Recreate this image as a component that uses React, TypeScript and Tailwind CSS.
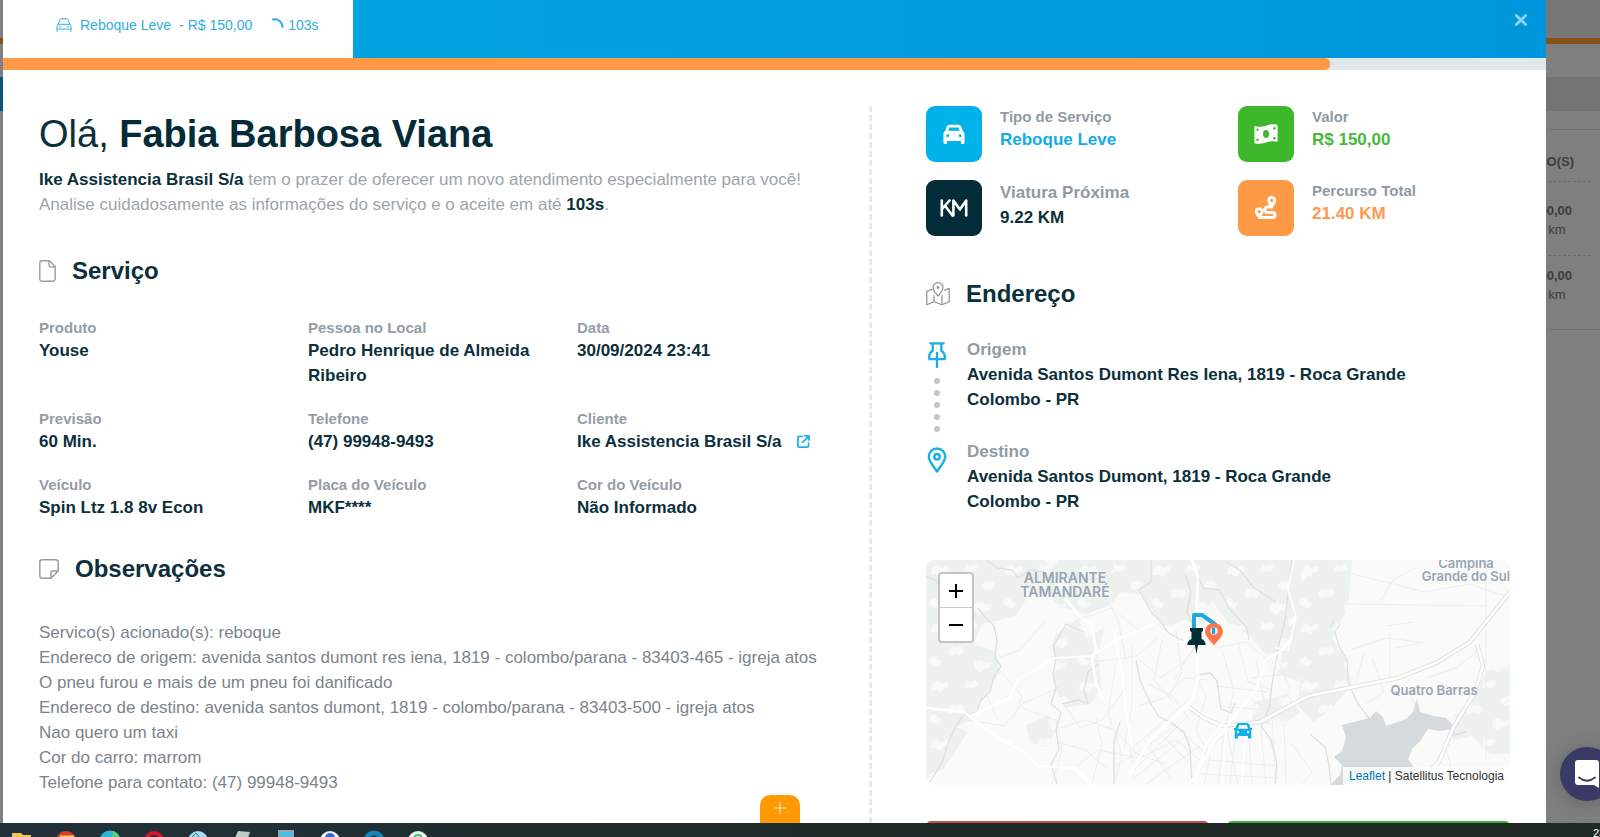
import type { ReactNode } from "react";

type Tone = "sky" | "green" | "navy" | "orange";

const tileTone: Record<Tone, string> = {
  sky: "bg-[#00b2e8]",
  green: "bg-[#3eb82b]",
  navy: "bg-[#032b38]",
  orange: "bg-[#fe9945]",
};

const valueTone: Record<Tone, string> = {
  sky: "text-[#12ace2]",
  green: "text-[#48b83a]",
  navy: "text-[#0b303b]",
  orange: "text-[#fb9a4e]",
};

const CarOutline = () => (
  <svg viewBox="0 0 16 14" className="mr-2 h-[14px] w-4" fill="none" stroke="currentColor" strokeWidth="1" strokeLinecap="round" strokeLinejoin="round" aria-hidden="true">
    <path d="M1 13.300V8.200c0-.9.500-1.600 1.300-1.900h11.400c.8.300 1.300 1 1.300 1.900v5.100M1 11h14M2.300 6.300l1.500-4.400C4.100 1.100 4.700.7 5.500.7h5c.8 0 1.400.4 1.700 1.200l1.500 4.400" />
    <path d="M3.700 8.700h.6M11.700 8.700h.6" strokeWidth="1.300" />
  </svg>
);

const FileOutline = () => (
  <svg viewBox="0 0 17 22" className="h-[22px] w-[17px]" fill="none" stroke="#999ea3" strokeWidth="1.400" strokeLinejoin="round" aria-hidden="true">
    <path d="M3 .8h7.500l5.700 5.700V19a2.200 2.200 0 0 1-2.200 2.200H3A2.200 2.200 0 0 1 .8 19V3A2.200 2.200 0 0 1 3 .8z" />
    <path d="M10 .8v4.500c0 1 .6 1.700 1.600 1.700h4.600" />
  </svg>
);

const NoteOutline = () => (
  <svg viewBox="0 0 20 20" className="h-5 w-5" fill="none" stroke="#999ea3" strokeWidth="1.500" strokeLinejoin="round" aria-hidden="true">
    <path d="M3.200.8h13.600a2.400 2.400 0 0 1 2.400 2.400V12l-7.200 7.200H3.200A2.400 2.400 0 0 1 .8 16.800V3.200A2.400 2.400 0 0 1 3.200.8z" />
    <path d="M12 19v-5.300c0-1 .7-1.700 1.700-1.700H19" />
  </svg>
);

const CarSolid = ({ className }: { className: string }) => (
  <svg viewBox="0 0 24 24" className={className} fill="currentColor" aria-hidden="true">
    <path
      fillRule="evenodd"
      d="M7.200 1.800h9.600c1.500 0 2.700.9 3.200 2.300l1.600 4.700c1.200.7 1.900 1.900 1.900 3.300v9.400c0 .9-.7 1.500-1.500 1.500h-.9c-.8 0-1.500-.6-1.500-1.500v-2H4.400v2c0 .9-.7 1.500-1.500 1.500H2c-.8 0-1.500-.6-1.500-1.500v-9.400c0-1.400.7-2.600 1.900-3.300L4 4.100c.5-1.400 1.700-2.300 3.200-2.300zm0 3.100L5.800 8.500h12.400l-1.400-3.600zM5.200 15.500a1.500 1.500 0 1 0 0-3.100 1.500 1.500 0 0 0 0 3.100zm13.600 0a1.500 1.500 0 1 0 0-3.100 1.500 1.500 0 0 0 0 3.100z"
    />
  </svg>
);

const Money = () => (
  <svg viewBox="0 0 24 20" className="h-5 w-6" aria-hidden="true">
    <path
      d="M.4 3.200c0-.8.700-1.300 1.400-1C5 3.300 8.500 2.900 12 1.700 15.700.500 19.400-.2 22.700.7c.6.200.9.600.9 1.200v14.800c0 .8-.7 1.300-1.400 1.100-3.200-.9-6.700-.4-10.200.8-3.700 1.200-7.400 1.700-10.700.8-.6-.2-.9-.6-.9-1.200z"
      fill="#fff"
    />
    <ellipse cx="12" cy="10" rx="3" ry="3.900" fill="#3eb82b" />
    <g fill="#3eb82b">
      <circle cx="3.600" cy="5.600" r="1.200" />
      <circle cx="3.600" cy="15.800" r="1.200" />
      <circle cx="20.400" cy="4.200" r="1.200" />
      <circle cx="20.400" cy="14.300" r="1.200" />
    </g>
  </svg>
);

const Route = () => (
  <svg viewBox="0 0 24 24" className="h-6 w-6" fill="none" aria-hidden="true">
    <path
      d="M17.500 11h-4a2.800 2.800 0 0 0 0 5.600h5a2.500 2.500 0 0 1 0 5H6.500"
      stroke="#fff"
      strokeWidth="3"
      strokeLinecap="round"
    />
    <path
      fillRule="evenodd"
      fill="#fff"
      d="M17.700 0c2.500 0 4.500 1.900 4.500 4.500 0 2.300-2.400 5.500-4.500 8-2.100-2.500-4.500-5.700-4.500-8 0-2.600 2-4.500 4.500-4.500zm0 6a1.600 1.600 0 1 0 0-3.200 1.600 1.600 0 0 0 0 3.200zM5.200 11.300c2.500 0 4.400 1.800 4.400 4.300 0 2.200-2.400 5-4.400 7.600-2-2.600-4.400-5.400-4.400-7.600 0-2.500 1.900-4.300 4.400-4.300zm0 5.900a1.600 1.600 0 1 0 0-3.200 1.600 1.600 0 0 0 0 3.200z"
    />
  </svg>
);

const Km = () => (
  <svg
    viewBox="0 0 28 18"
    className="h-[18px] w-7"
    fill="none"
    stroke="#fff"
    strokeWidth="2.600"
    strokeLinecap="round"
    strokeLinejoin="round"
    aria-hidden="true"
  >
    <path d="M1.800 1.500v15M9.500 1.500L2 10M5.200 7l7.300 9.500M13.400 16.500v-15l6.500 9 6.300-9v15" />
  </svg>
);

const MapOutline = () => (
  <svg viewBox="0 0 24 24" className="h-6 w-6" fill="none" stroke="#8e9296" strokeWidth="1.200" strokeLinejoin="round" aria-hidden="true">
    <path d="M6.300 7.200L.8 9.400v13.300l7.200-2.900 8 2.900 7.200-2.900V6.400l-5 2M8 13.200v6.600M16 13.200v9.500" />
    <path d="M12 14.200c-1.600-2.300-5-5.300-5-8.600a5 5 0 0 1 10 0c0 3.300-3.400 6.300-5 8.600z" />
    <circle cx="12" cy="5.500" r=".8" />
  </svg>
);

const PinOutline = () => (
  <svg viewBox="0 0 18 26" className="h-[26px] w-[18px]" fill="none" stroke="#18b0e2" strokeWidth="2.300" strokeLinecap="round" strokeLinejoin="round" aria-hidden="true">
    <path d="M2.300 1.300h13.400M4.700 1.500v7.200C2.700 9.900 1.200 12 1.200 14.700v2.400h15.600v-2.400c0-2.700-1.500-4.800-3.500-6V1.500M9 11v14" />
  </svg>
);

const MarkerOutline = () => (
  <svg viewBox="0 0 20 26" className="h-[26px] w-5" fill="none" stroke="#18b0e2" strokeWidth="2.400" strokeLinejoin="round" aria-hidden="true">
    <path d="M10 24.500C7.500 20.500 1.800 14.500 1.800 9.700a8.200 8.200 0 0 1 16.400 0c0 4.800-5.700 10.800-8.200 14.800z" />
    <circle cx="10" cy="9.700" r="2.700" />
  </svg>
);

const ExternalLink = () => (
  <svg viewBox="0 0 14 14" className="h-[13px] w-[13px]" fill="none" stroke="#1cb2e6" strokeWidth="1.900" strokeLinecap="round" strokeLinejoin="round" aria-hidden="true">
    <path d="M5.500 1.500H2.200A1.200 1.200 0 0 0 1 2.700v9.100A1.200 1.200 0 0 0 2.200 13h9a1.200 1.200 0 0 0 1.200-1.200V8.500M8.500 1H13v4.500M13 1L6 8" />
  </svg>
);

function Stat({ label, value, tone, icon, large }: { label: string; value: string; tone: Tone; icon: ReactNode; large?: boolean }) {
  return (
    <div className="flex gap-[18px]">
      <div className={"flex h-14 w-14 shrink-0 items-center justify-center rounded-[9px] text-white " + tileTone[tone]}>{icon}</div>
      <div className="font-bold">
        <div className={large ? "text-[17px] leading-[25px] text-[#8f9aa6]" : "text-[15px] leading-[21px] text-[#8f9aa6]"}>{label}</div>
        <div className={"text-[17px] leading-[25px] " + valueTone[tone]}>{value}</div>
      </div>
    </div>
  );
}

function Field({ label, children }: { label: string; children: ReactNode }) {
  return (
    <div>
      <dt className="text-[15px] leading-[21px] text-[#949da7]">{label}</dt>
      <dd className="text-[17px] leading-[25px] text-[#0b303b]">{children}</dd>
    </div>
  );
}

function SectionTitle({ icon, children }: { icon: ReactNode; children: ReactNode }) {
  return (
    <div className="flex items-center gap-4">
      {icon}
      <h2 className="text-[24px] leading-7 font-bold text-[#0b303b]">{children}</h2>
    </div>
  );
}

function MapView() {
  return (
    <svg viewBox="0 0 584 225" preserveAspectRatio="xMidYMid slice" className="block h-full w-full" role="img" aria-label="Mapa do percurso">
      <defs>
        <pattern id="clearings" width="74" height="58" patternUnits="userSpaceOnUse">
          <path
            d="M6 8l5-3 4 3 6-2 2 5-6 2-2 4-5-3-5 1zM40 4l4 2 5-2 3 4-4 4-6-1-4 2zM58 22l6-2 5 4-3 5-6 1-4-4zM26 28l5 2 4-2 4 5-5 5-4-2-6 2-2-5zM4 40l5-2 3 4 4 1-3 5-6-1-4-3zM48 44l7-2 5 3 6-1-2 6-6 1-4 4-5-4z"
            fill="#f8faf8"
          />
        </pattern>
      </defs>
      <rect width="584" height="225" fill="#fafaf9" />
      <g>
        {["#edf2ef", "url(#clearings)"].map((fill) => (
          <g key={fill} fill={fill}>
            <path d="M0 0h118l14 12-8 18-22 6-12 20-34 8-8 20 22 8 4 20-12 20-20 30-24 8-18 26L0 218z" />
            <path d="M132 0h95l14 16-16 20-30-4-12 14-22 8-30-8-14-24z" />
            <path d="M128 76l24-18 8 20 18-10-6 28 4 30-12 18-26 4-10-24z" />
            <path d="M222 0h172v8l-20 4 6 34-18 14 6 30-28 4-18-20-18-8-18-26-8 26-20-6-20 8-22-32z" />
            <path d="M392 0h34l-4 48-16 30 14 20 6 28-20 22-18 14-16-16 2-24-22-8 4-24-4-14 18-14-2-28z" />
            <path d="M328 142l34-8 12 18-18 14-30-4zM560 112l24-8v90h-20l-18-18-18 4-10-20 24-12z" />
            <path d="M0 176l24-12 18 8-24 36-18 12zM100 165l22-10 8 14-8 18-18-4z" />
          </g>
        ))}
      </g>
      <g fill="none" stroke="#eceeee" strokeWidth="1">
        <path d="M2 150l40 10 36 6 18-22 36-16 34-26 44-6 22-18M70 106l26 30-8 22M96 148l34 12 6 30-10 34M54 120l18 40M135 168l24-8 30 10 22 24 28 10M130 182l30 8 20 18M138 144l16 24 22-8 24-32" />
        <path d="M152 60l34-12 26 22 18-6 18 12M176 30l16 30 8 40M190 104l-8 48 14 44-8 28M206 86v60l-8 42M150 206l22-16 42 8 36-18 24 20 22-24M166 224l10-40-6-26" />
        <path d="M204 190l56-48 8 8-60 60zM218 180l28 40M230 168l32 34M240 158l40 36M206 220l52-42M220 224l54-38M190 206l40-26 24-20" />
        <path d="M214 100l20 18 24-16 18-24M222 124l24 12 18 24M236 80l-8 40 18 20M250 70l6 42-14 26M270 84l-22 36M212 146l26-8 20-20 24 2" />
        <path d="M268 112l12 24-10 34 14 26-6 28M288 88l32-6 24 20M296 90l12 40-8 36 12 58M312 82l10 40 24 8M330 100l8 40-18 30M350 94l14 36-18 24M290 126l52 6M290 146l50 4M326 118l54-6" />
        <path d="M362 106l20 8 24-6 22 12M322 162l4 62M334 160l6 64M346 158l4 66M358 164l2 60M298 172l-6 52M310 170l-6 54M284 200l68 6M276 214l76 4M366 184l20 28-10 13" />
        <path d="M378 80l18 26 10 20M424 90l36-12 34 4M455 40l12-20 22-12M460 66l28-4M464 74v48M470 88l28-6M438 92l-8 30M446 98l12 34-18 12M500 118l30-10 26-20M482 130l12 26 30 12M508 120l32 14M520 188l10 37M540 140l26 10 18-10" />
        <path d="M418 12l50 12 30 8 46-8 40 14M416 44l144 2M560 0v200M120 60l-26 30-28 10M108 10l10 30M176 0l8 24" />
      </g>
      <g fill="none" stroke="#dce0e3" strokeWidth="1.300" strokeLinejoin="round">
        <path d="M0 16l10 4 8 14M60 0l12 8 14 2 6 8 12-8 14 2M52 48l8 10 8 8 3 14-2 18 6 8-7 10-4 16-9 8-4 12-14 4-8 12-8 18-4 14-8 14-5 8" />
        <path d="M158 72l-18-8-8 14-5 8 3 12-3 16 3 14-5 16 10 8-5 18 3 20-8 14 6 20M136 144l16-4 10 4-4-14 4-18 10-8" />
        <path d="M225 0v22l-12 8 12 22 10 10 8 12 18 8 8-12-8-18 4-20-6-18M210 100l4 20 10 22 8 14 12 6 14 10 6 16 2 36M194 162l-6 20v42" />
        <path d="M269 10l8 18 16 2 10 18 18 20 2 12M300 2l14 8 14 18 22 14M366 0l-4 34-3 26-6 24-6 34-4 30-8 18 10 14 6 24-2 20" />
        <path d="M414 64l-5 8 4 14 8 14 1 22 10 22 14 18M270 115l14-2 7 8 4 28 10 4 4-10M408 60l-4 8M385 175l14 12 4 18 2 20M540 172l-16 4" />
      </g>
      <path
        d="M444 158l6-7 7 6 3 9 20-7 7-7 4-14 3 14 14 4 12 2 10 10-16 3-12-2-8 12-8 8-4 10 10 14 2 12h-90l10-10 2-10-8-8 8-6 4-14-4-12z"
        fill="#d5dadd"
      />
      <g fill="none" stroke="#dfe3e4" strokeWidth="4.600" strokeLinejoin="round">
        <path d="M264 148l14 10 18 8 38-4 48-26 90-18 40-16 32-20 24-30 16-20M551 84l6 22-8 26-22 36-14 34-28 26" />
      </g>
      <g fill="none" stroke="#fff" strokeWidth="2.600" strokeLinejoin="round" strokeLinecap="round">
        <path d="M0 148l38 4 28 22 32 18 14 14 36 2 18 17M140 39l14 18 12 8 4 26-4 8 4 24 6 16M266 0l6 18-2 40 2 60-6 22-42 40-20 34" />
        <path d="M264 148l14 10 18 8 38-4 48-26 90-18 40-16 32-20 24-30 16-20M551 84l6 22-8 26-22 36-14 34-28 26" />
        <path d="M44 156l40-18 8-18 36-22 38-2 28-18 34-14 24 18 20-2M188 72l8 40 4 40 6 34M296 164l-16 20-12 40M264 224l24-42 42-52 10-30 16-10 10-12" strokeWidth="2" />
        <path d="M368 0l-6 30 8 26-8 34-12-2M320 164l-4 60M300 170l-4 54" strokeWidth="1.600" />
      </g>
      <g fill="#98a5b4" textAnchor="middle" className="font-[Inter,sans-serif] font-semibold">
        <text x="139" y="23" fontSize="14">ALMIRANTE</text>
        <text x="139" y="37" fontSize="14">TAMANDARÉ</text>
        <text x="540" y="8" fontSize="13">Campina</text>
        <text x="540" y="21" fontSize="13">Grande do Sul</text>
        <text x="508" y="135" fontSize="13">Quatro Barras</text>
      </g>
      <path d="M268 72V55h8l14 10" fill="none" stroke="#22a8dc" strokeWidth="4" strokeLinejoin="round" />
      <path
        fill="#ff7548"
        d="M288 63c4.900 0 8.900 3.900 8.900 8.800 0 4.300-5.900 9.600-8.900 13.700-3-4.100-8.900-9.400-8.900-13.700 0-4.900 4-8.800 8.900-8.800z"
      />
      <circle cx="288" cy="71" r="3.800" fill="#d9eef6" />
      <path d="M287.500 67.500v6.500" stroke="#22a8dc" strokeWidth="3" />
      <path d="M264 68h13v3l-1.500 1v7c3.500 1.500 4 3.500 4.200 6H272l-1.500 9-1.600-9h-7.700c.2-2.500 1-4.500 4.300-6v-7l-1.500-1z" fill="#032b38" />
      <g transform="translate(308 163)" fill="#12b0e6">
        <path
          fillRule="evenodd"
          d="M5 0h8c1.200 0 2 .6 2.400 1.700L16.500 5H18v2h-.7v8.500h-3.300V13H4v2.500H.7V7H0V5h1.500l1.100-3.300C3 .6 3.800 0 5 0zm.2 2L4 5.800h10L12.800 2zM3.900 10.300a1.200 1.200 0 1 0 0-2.400 1.200 1.200 0 0 0 0 2.400zm10.200 0a1.200 1.200 0 1 0 0-2.400 1.200 1.200 0 0 0 0 2.400z"
        />
      </g>
    </svg>
  );
}

function PageStrip() {
  return (
    <div className="flex w-[54px] shrink-0 flex-col overflow-hidden bg-[#7f7f7f] text-[13px] text-[#3a3d40]">
      <div className="h-[38px] shrink-0 bg-[#777]" />
      <div className="h-[6px] shrink-0 bg-[#8a5019]" />
      <div className="h-[33px] shrink-0" />
      <div className="h-[34px] shrink-0 bg-[#747474]" />
      <div className="h-[19px] shrink-0 border-b border-[#717171]" />
      <div className="flex h-[200px] shrink-0 justify-end border-b border-[#717171] pr-[9px] whitespace-nowrap">
        <div>
          <div className="flex h-[52px] items-center justify-end border-b border-dashed border-[#6b6b6b] pt-3 pr-[17px] font-bold">
            SERVIÇO(S)
          </div>
          <div className="flex h-[74px] items-end justify-end border-b border-dashed border-[#6b6b6b] pr-[19px] pb-4">
            <div>
              <b className="block leading-[19px]">R$ 150,00</b>
              <span className="block leading-[19px]">21.40 km</span>
            </div>
          </div>
          <div className="flex justify-end pt-[10px] pr-[19px]">
            <div>
              <b className="block leading-[19px]">R$ 150,00</b>
              <span className="block leading-[19px]">21.40 km</span>
            </div>
          </div>
        </div>
      </div>
    </div>
  );
}

function Taskbar() {
  return (
    <div className="flex h-[14px] shrink-0 items-start justify-between overflow-hidden bg-linear-to-r from-[#22313a] via-[#202b29] to-[#1f2a24]">
      <svg viewBox="0 0 440 14" className="h-[14px] w-[440px]" aria-hidden="true">
        <path d="M12 10h9l2 2h8v2H12z" fill="#f2c554" />
        <circle cx="66" cy="18" r="10" fill="#de3b30" />
        <path d="M60 14h14" stroke="#ffd04a" strokeWidth="3" />
        <circle cx="110" cy="18" r="10.500" fill="#2bb4d8" />
        <path d="M113 8a10.500 10.500 0 0 1 7 8h-8z" fill="#57cf70" />
        <circle cx="154" cy="18" r="8" fill="none" stroke="#d8142c" strokeWidth="4" />
        <circle cx="198" cy="18" r="10" fill="#a7dcea" />
        <path d="M192 14l4-4 3 4" stroke="#39708d" fill="none" />
        <path d="M238 8l12 1-2 6h-13z" fill="#bccac9" />
        <path d="M278 7h16v8h-16z" fill="#8ba8b5" />
        <path d="M280 9h12v4h-12z" fill="#3dc2ea" />
        <circle cx="330" cy="18" r="10" fill="#f2f5fa" />
        <circle cx="330" cy="15" r="5" fill="#2f65dd" />
        <circle cx="374" cy="18" r="8" fill="none" stroke="#1483b9" strokeWidth="5" />
        <circle cx="418" cy="18" r="10" fill="#f3f8f5" />
        <path d="M414 14a5 5 0 0 1 8 0" stroke="#3dc266" strokeWidth="2" fill="none" />
      </svg>
      <span className="w-[7px] shrink-0 overflow-hidden pt-1 text-[11px] leading-3 whitespace-nowrap text-white">23:41</span>
    </div>
  );
}

const notes = [
  "Servico(s) acionado(s): reboque",
  "Endereco de origem: avenida santos dumont res iena, 1819 - colombo/parana - 83403-465 - igreja atos",
  "O pneu furou e mais de um pneu foi danificado",
  "Endereco de destino: avenida santos dumont, 1819 - colombo/parana - 83403-500 - igreja atos",
  "Nao quero um taxi",
  "Cor do carro: marrom",
  "Telefone para contato: (47) 99948-9493",
];

export default function App() {
  return (
    <div className="relative flex h-screen flex-col overflow-hidden bg-[#7f7f7f] font-['Liberation_Sans',Arial,sans-serif]">
      <div className="flex min-h-0 flex-1">
        <div className="w-[3px] shrink-0 bg-[#7f7f7f]">
          <div className="h-[38px]" />
          <div className="h-[6px] bg-[#8a5019]" />
          <div className="h-[33px]" />
          <div className="h-[34px] bg-[#0a5674]" />
        </div>

        <main className="flex min-w-0 flex-1 flex-col overflow-hidden bg-white">
          <header className="flex h-[58px] shrink-0 items-start justify-between bg-linear-to-r from-[#04a6e2] to-[#0096dc]">
            <button type="button" className="flex h-full w-[350px] items-center bg-white pb-2 pl-[53px] text-[14px] text-[#33ace0]">
              <CarOutline />
              <span>Reboque Leve</span>
              <span className="ml-2">- R$ 150,00</span>
              <svg viewBox="0 0 12 14" className="mr-1 ml-5 h-[14px] w-3" fill="none" aria-hidden="true">
                <path d="M1 1.500C6 .500 10.500 4 10.500 9" stroke="#1fb2e6" strokeWidth="1.900" strokeLinecap="round" />
              </svg>
              <span>103s</span>
            </button>
            <button type="button" aria-label="Fechar" className="mt-[14px] mr-[18px]">
              <svg viewBox="0 0 14 12" className="h-3 w-[14px]" stroke="#8ed3f1" strokeWidth="2.800" strokeLinecap="round" aria-hidden="true">
                <path d="M2.300 1.500l9.400 9M11.700 1.500l-9.400 9" />
              </svg>
            </button>
          </header>
          <div className="h-3 shrink-0 bg-[#e1e8ed]" role="progressbar" aria-valuenow={86} aria-valuemin={0} aria-valuemax={100} aria-label="Tempo restante">
            <div className="h-full w-[86%] rounded-r-[5px] bg-[#fe9945]" />
          </div>

          <div className="flex min-h-0 flex-1 overflow-hidden pt-9 pr-9 pl-9">
            <section className="w-[830px] shrink-0">
              <h1 className="pt-1 text-[38px] leading-[48px] font-normal text-[#0b303b]">
                Olá, <b className="text-[#032b38]">Fabia Barbosa Viana</b>
              </h1>
              <p className="pt-[9px] text-[17px] leading-[25px] text-[#9ca4ab]">
                <b className="text-[#0b303b]">Ike Assistencia Brasil S/a</b> tem o prazer de oferecer um novo atendimento especialmente para você!
                <br />
                Analise cuidadosamente as informações do serviço e o aceite em até <b className="text-[#0b303b]">103s</b>.
              </p>

              <div className="pt-10">
                <SectionTitle icon={<FileOutline />}>Serviço</SectionTitle>
              </div>
              <dl className="grid grid-cols-[269px_269px_1fr] gap-y-5 pt-8 font-bold">
                <Field label="Produto">Youse</Field>
                <Field label="Pessoa no Local">
                  <span className="block w-[240px]">Pedro Henrique de Almeida Ribeiro</span>
                </Field>
                <Field label="Data">30/09/2024 23:41</Field>
                <Field label="Previsão">60 Min.</Field>
                <Field label="Telefone">(47) 99948-9493</Field>
                <Field label="Cliente">
                  <span className="flex items-center gap-4">
                    Ike Assistencia Brasil S/a
                    <a href="#cliente" aria-label="Abrir cliente">
                      <ExternalLink />
                    </a>
                  </span>
                </Field>
                <Field label="Veículo">Spin Ltz 1.8 8v Econ</Field>
                <Field label="Placa do Veículo">MKF****</Field>
                <Field label="Cor do Veículo">Não Informado</Field>
              </dl>

              <div className="pt-[35px]">
                <SectionTitle icon={<NoteOutline />}>Observações</SectionTitle>
              </div>
              <div className="pt-[37px] text-[17px] leading-[25px] text-[#7b848b]">
                {notes.map((line) => (
                  <p key={line}>{line}</p>
                ))}
              </div>
            </section>

            <section className="min-w-0 flex-1 border-l-3 border-dashed border-[#e5eaec] pl-[54px]">
              <div className="grid grid-cols-[312px_1fr] gap-y-[18px]">
                <Stat label="Tipo de Serviço" value="Reboque Leve" tone="sky" icon={<CarSolid className="h-[22px] w-[22px]" />} />
                <Stat label="Valor" value="R$ 150,00" tone="green" icon={<Money />} />
                <Stat label="Viatura Próxima" value="9.22 KM" tone="navy" icon={<Km />} large />
                <Stat label="Percurso Total" value="21.40 KM" tone="orange" icon={<Route />} />
              </div>

              <div className="pt-11">
                <SectionTitle icon={<MapOutline />}>Endereço</SectionTitle>
              </div>

              <div className="flex gap-5 pt-[29px] text-[17px] leading-[25px] font-bold text-[#0b303b]">
                <div className="flex w-[21px] shrink-0 flex-col items-center pt-[5px]">
                  <PinOutline />
                  <div className="flex flex-col gap-[6px] pt-[10px] pb-[15px]">
                    {[0, 1, 2, 3, 4].map((dot) => (
                      <span key={dot} className="block h-[6px] w-[6px] rounded-full bg-[#c3c5c7]" />
                    ))}
                  </div>
                  <MarkerOutline />
                </div>
                <div className="flex flex-col gap-[27px]">
                  <div>
                    <div className="text-[#8f9aa6]">Origem</div>
                    <div>Avenida Santos Dumont Res Iena, 1819 - Roca Grande</div>
                    <div>Colombo - PR</div>
                  </div>
                  <div>
                    <div className="text-[#8f9aa6]">Destino</div>
                    <div>Avenida Santos Dumont, 1819 - Roca Grande</div>
                    <div>Colombo - PR</div>
                  </div>
                </div>
              </div>

              <div className="relative mt-[46px] h-[225px] overflow-hidden rounded-lg">
                <MapView />
                <div className="absolute top-3 left-3 flex w-9 flex-col overflow-hidden rounded border-2 border-[#c3c4c4] bg-white text-black">
                  <button type="button" aria-label="Aumentar zoom" className="flex h-[34px] items-center justify-center border-b border-[#ccc]">
                    <svg viewBox="0 0 14 14" className="h-[14px] w-[14px]" stroke="currentColor" strokeWidth="2" aria-hidden="true">
                      <path d="M7 0v14M0 7h14" />
                    </svg>
                  </button>
                  <button type="button" aria-label="Diminuir zoom" className="flex h-[33px] items-center justify-center">
                    <svg viewBox="0 0 14 14" className="h-[14px] w-[14px]" stroke="currentColor" strokeWidth="2" aria-hidden="true">
                      <path d="M0 7h14" />
                    </svg>
                  </button>
                </div>
                <div className="absolute right-0 bottom-0 bg-white/80 px-[6px] text-[12px] leading-[18px] text-[#333]">
                  <a href="#leaflet" className="text-[#0078a8]">
                    Leaflet
                  </a>{" "}
                  | Satellitus Tecnologia
                </div>
              </div>

              <div className="grid grid-cols-2 gap-[18px] pt-9">
                <button type="button" aria-label="Recusar" className="h-12 rounded-[5px] bg-[#c94d4b]" />
                <button type="button" aria-label="Aceitar" className="h-12 rounded-[5px] bg-[#3eb035]" />
              </div>
            </section>
          </div>
        </main>

        <PageStrip />
      </div>

      <button
        type="button"
        aria-label="Adicionar"
        className="absolute bottom-[14px] left-[760px] flex h-7 w-10 justify-center rounded-t-[10px] bg-[#ff9a05] pt-[7px]"
      >
        <svg viewBox="0 0 12 12" className="h-3 w-3" stroke="#ffe8c4" strokeWidth="1.200" aria-hidden="true">
          <path d="M6 0v12M0 6h12" />
        </svg>
      </button>

      <button
        type="button"
        aria-label="Abrir chat"
        className="absolute -right-[14px] bottom-[36px] flex h-[54px] w-[54px] items-center justify-center rounded-full bg-[#3a3a66] shadow-[0_2px_20px_rgba(0,0,0,0.22)]"
      >
        <svg viewBox="0 0 24 28" className="h-7 w-6" aria-hidden="true">
          <path d="M3 0h18a3 3 0 0 1 3 3v25l-5-3H3a3 3 0 0 1-3-3V3a3 3 0 0 1 3-3z" fill="#fff" />
          <path d="M4 17.500c5 4 11 4 16 0" fill="none" stroke="#3a3a66" strokeWidth="1.800" strokeLinecap="round" />
        </svg>
      </button>

      <Taskbar />
    </div>
  );
}
